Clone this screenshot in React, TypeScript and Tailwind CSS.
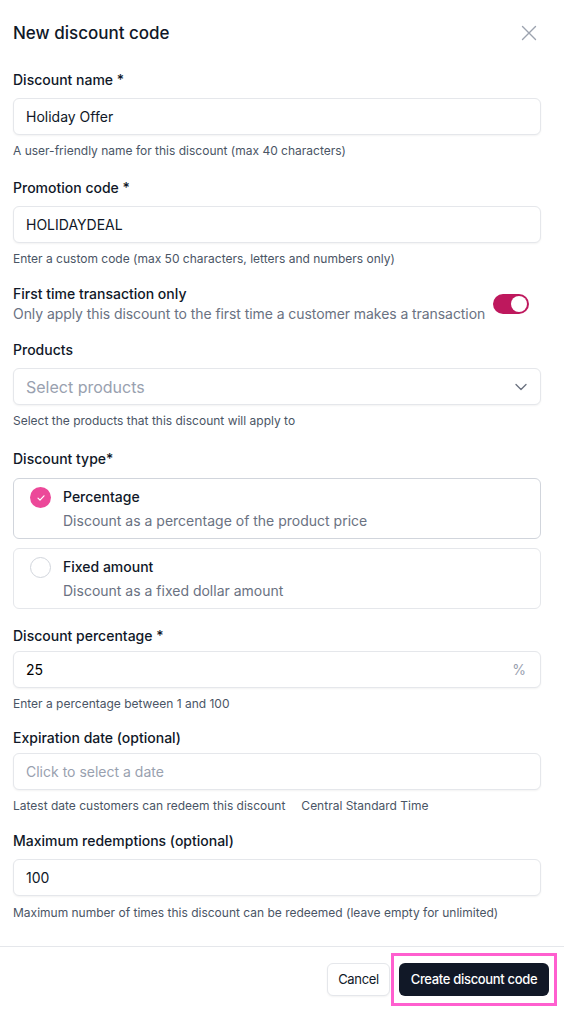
import React, { useState } from 'react';

const font = { fontFamily: 'Inter, "Liberation Sans", sans-serif' };

const Label: React.FC<{ children: React.ReactNode; className?: string }> = ({ children, className = '' }) => (
  <div className={`text-sm leading-5 font-medium text-gray-900 ${className}`}>{children}</div>
);

const Helper: React.FC<{ children: React.ReactNode; className?: string }> = ({ children, className = '' }) => (
  <div className={`text-xs leading-4 text-gray-600 ${className}`}>{children}</div>
);

const ChevronDown = () => (
  <svg width="20" height="20" viewBox="0 0 24 24" fill="none" stroke="#6b7280" strokeWidth="1.6" strokeLinecap="round" strokeLinejoin="round">
    <path d="m6 9 6 6 6-6" />
  </svg>
);

const CloseIcon = () => (
  <svg width="16" height="16" viewBox="0 0 16 16" fill="none" stroke="#9ca3af" strokeWidth="1.4" strokeLinecap="round">
    <path d="M1.5 1.5l13 13M14.5 1.5l-13 13" />
  </svg>
);

const RadioCard: React.FC<{
  selected: boolean;
  title: string;
  description: string;
  onClick: () => void;
}> = ({ selected, title, description, onClick }) => (
  <button
    onClick={onClick}
    className={`w-full flex items-start gap-3 text-left rounded-md border bg-white px-4 pt-2 pb-[7px] ${
      selected ? 'border-gray-300' : 'border-gray-200'
    }`}
  >
    {selected ? (
      <span className="w-[21px] h-[21px] shrink-0 rounded-full bg-[#ec4899] flex items-center justify-center">
        <svg width="10" height="10" viewBox="0 0 10 10" fill="none" stroke="white" strokeWidth="1.2" strokeLinecap="round" strokeLinejoin="round">
          <path d="M2 5.2l2 2 4-4.4" />
        </svg>
      </span>
    ) : (
      <span className="w-[21px] h-[21px] shrink-0 rounded-full border border-gray-300 bg-white" />
    )}
    <div className="flex flex-col gap-1">
      <span className="text-sm leading-5 font-medium text-gray-900">{title}</span>
      <span className="text-sm leading-5 text-gray-500">{description}</span>
    </div>
  </button>
);

const inputBox = 'w-full h-[37px] rounded-md border border-gray-200 bg-white shadow-xs px-3 text-sm text-gray-900 flex items-center';

export default function App() {
  const [firstTime, setFirstTime] = useState(true);
  const [type, setType] = useState<'percentage' | 'fixed'>('percentage');

  return (
    <div className="w-[564px] min-h-[1009px] bg-white flex flex-col" style={font}>
      <div className="pl-[13px] pr-[23px] pb-[25px]">
        {/* Header */}
        <div className="pt-[19px] flex items-center justify-between">
          <h2 className="text-[17px] leading-7 font-medium text-gray-900">New discount code</h2>
          <button className="mr-1">
            <CloseIcon />
          </button>
        </div>

        {/* Discount name */}
        <Label className="mt-[23px] mb-2">Discount name *</Label>
        <div className={inputBox}>Holiday Offer</div>
        <Helper className="mt-2">A user-friendly name for this discount (max 40 characters)</Helper>

        {/* Promotion code */}
        <Label className="mt-[19px] mb-2">Promotion code *</Label>
        <div className={inputBox}>HOLIDAYDEAL</div>
        <Helper className="mt-2">Enter a custom code (max 50 characters, letters and numbers only)</Helper>

        {/* First time toggle */}
        <div className="mt-[17px] flex items-center justify-between pr-3">
          <div>
            <div className="text-sm leading-5 font-medium text-gray-900">First time transaction only</div>
            <div className="text-sm leading-5 text-gray-500 tracking-[-0.005em]">
              Only apply this discount to the first time a customer makes a transaction
            </div>
          </div>
          <button
            onClick={() => setFirstTime(!firstTime)}
            className={`w-9 h-5 rounded-full flex items-center px-[2px] shrink-0 ${
              firstTime ? 'bg-[#be185d] justify-end' : 'bg-gray-200 justify-start'
            }`}
          >
            <span className="w-4 h-4 rounded-full bg-white" />
          </button>
        </div>

        {/* Products */}
        <Label className="mt-4 mb-2">Products</Label>
        <div className={`${inputBox} justify-between pr-[9px]`}>
          <span className="text-base text-gray-400">Select products</span>
          <ChevronDown />
        </div>
        <Helper className="mt-2">Select the products that this discount will apply to</Helper>

        {/* Discount type */}
        <Label className="mt-5 mb-[9px]">Discount type*</Label>
        <div className="flex flex-col gap-[9px]">
          <RadioCard
            selected={type === 'percentage'}
            title="Percentage"
            description="Discount as a percentage of the product price"
            onClick={() => setType('percentage')}
          />
          <RadioCard
            selected={type === 'fixed'}
            title="Fixed amount"
            description="Discount as a fixed dollar amount"
            onClick={() => setType('fixed')}
          />
        </div>

        {/* Discount percentage */}
        <Label className="mt-[17px] mb-[5px]">Discount percentage *</Label>
        <div className={`${inputBox} justify-between pr-[14px]`}>
          <span className="text-black">25</span>
          <span className="text-gray-400">%</span>
        </div>
        <Helper className="mt-2">Enter a percentage between 1 and 100</Helper>

        {/* Expiration date */}
        <Label className="mt-4 mb-[5px]">Expiration date (optional)</Label>
        <div className={inputBox}>
          <span className="text-gray-400">Click to select a date</span>
        </div>
        <Helper className="mt-2 flex gap-4">
          <span>Latest date customers can redeem this discount</span>
          <span>Central Standard Time</span>
        </Helper>

        {/* Maximum redemptions */}
        <Label className="mt-[17px] mb-2">Maximum redemptions (optional)</Label>
        <div className={inputBox}>100</div>
        <Helper className="mt-[9px]">Maximum number of times this discount can be redeemed (leave empty for unlimited)</Helper>
      </div>

      {/* Footer */}
      <div className="border-t border-gray-200 pt-[6px] pr-[7px] flex items-center justify-end">
        <button className="h-[33px] w-[63px] rounded-md border border-gray-200 bg-white text-[13px] tracking-tight text-gray-900 shadow-xs">
          Cancel
        </button>
        <div className="ml-px border-[3px] border-[#ff5fcf] px-[5px] py-[7px]">
          <button className="h-[33px] w-[150px] rounded-md bg-[#111827] text-[13px] font-medium tracking-tight text-white">
            Create discount code
          </button>
        </div>
      </div>
    </div>
  );
}
